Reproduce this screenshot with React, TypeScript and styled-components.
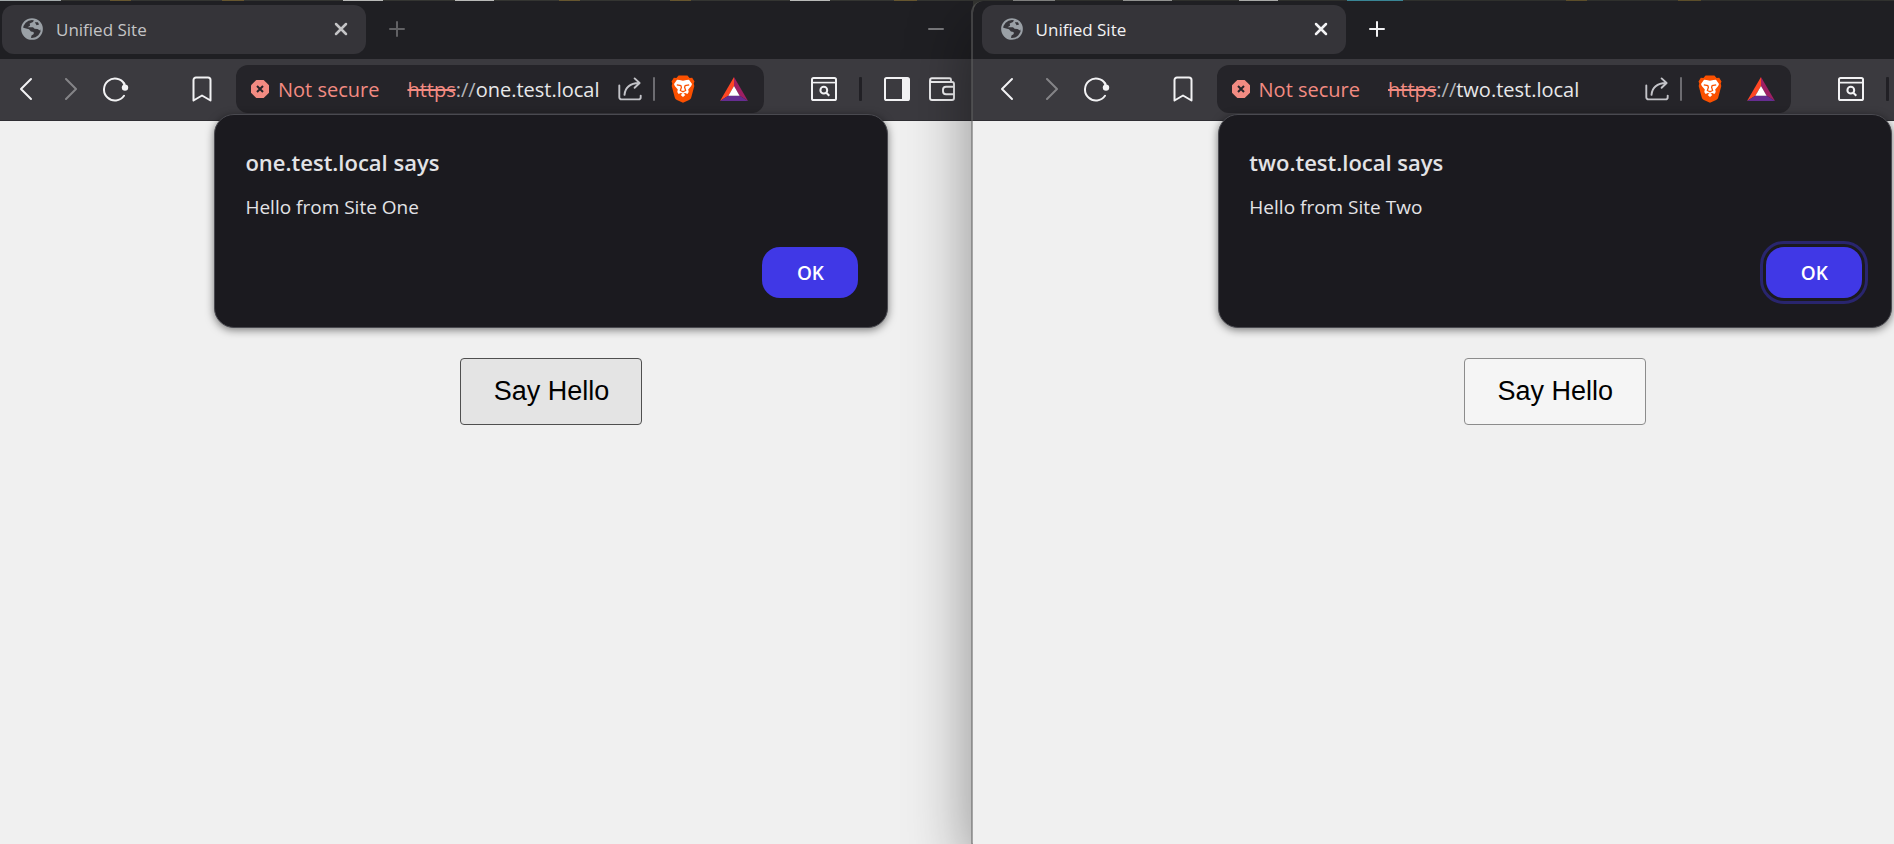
import React from "react";
import styled, { createGlobalStyle } from "styled-components";

const Global = createGlobalStyle`
  * { box-sizing: border-box; }
  html, body, #root { height: 100%; }
  body { margin: 0; overflow: hidden; background: #222; font-family: "Open Sans", "Noto Sans", sans-serif; }
  button, input { font: inherit; margin: 0; }
`;

/* Slivers of the windows behind, visible along the top edge of the screen. */
const slivers: [number, number, string][] = [
  [0, 3.2, "#a3aaab"],
  [5.8, 6.9, "#66562f"],
  [11.7, 12.9, "#66562f"],
  [18.1, 20.2, "#b9bab8"],
  [24, 26.1, "#b9bab8"],
  [29.5, 30.6, "#66562f"],
  [35.4, 36.5, "#66562f"],
  [41.7, 43.8, "#b9bab8"],
  [47.2, 48.4, "#66562f"],
  [53.5, 55.7, "#8b8c8a"],
  [59.3, 61.9, "#a0a19f"],
  [65.4, 67.5, "#b9bab8"],
  [71.1, 74.1, "#3f93a4"],
  [82.7, 83.8, "#66562f"],
  [88.6, 89.8, "#66562f"],
];

const sliverGradient = slivers
  .map(([from, to, c]) => `#343532 ${from}%, ${c} ${from}%, ${c} ${to}%, #343532 ${to}%`)
  .join(", ");

const Desktop = styled.main`
  display: flex;
  min-height: 100vh;
  padding-top: 1px;
  overflow: hidden;
  background: #343532 linear-gradient(90deg, ${sliverGradient}) top / 100% 1px no-repeat;
`;

const Pane = styled.section<{ $front?: boolean }>`
  position: relative;
  z-index: ${(p) => (p.$front ? 1 : 0)};
  flex: ${(p) => (p.$front ? "1 1 0" : "0 0 51.35%")};
  min-width: 0;
  display: flex;
  flex-direction: column;
  margin-left: ${(p) => (p.$front ? -2 : 0)}px;
  background: #1f1f23;
  background-clip: padding-box;
  border-left: ${(p) => (p.$front ? "2px solid rgba(98, 98, 98, 0.53)" : "0")};
  border-top-left-radius: ${(p) => (p.$front ? "12px" : "0")};
  box-shadow: ${(p) => (p.$front ? "0 24px 64px rgba(0, 0, 0, 0.42)" : "none")};
`;

const Clip = styled.div<{ $front?: boolean }>`
  flex: 1;
  display: flex;
  overflow: hidden;
  border-top-left-radius: ${(p) => (p.$front ? "10px" : "0")};
`;

const Frame = styled.div<{ $width: string }>`
  position: relative;
  flex: 0 0 ${(p) => p.$width};
  display: flex;
  flex-direction: column;
`;

const TabStrip = styled.header<{ $front?: boolean }>`
  display: flex;
  align-items: center;
  height: 58px;
  padding-left: ${(p) => (p.$front ? 9 : 2)}px;
  padding-bottom: 2px;
  color: ${(p) => (p.$front ? "#f2f2f4" : "#c4c4c6")};
`;

const Tab = styled.div`
  display: flex;
  align-items: center;
  width: 364px;
  height: 49px;
  padding: 0 14px 0 19px;
  border-radius: 12px;
  background: #353439;
  font-size: 17px;
`;

const TabTitle = styled.span`
  flex: 1;
  padding-left: 13px;
`;

const IconButton = styled.button<{ $w?: number; $gap?: number; $dim?: boolean }>`
  flex: none;
  display: grid;
  place-items: center;
  width: ${(p) => p.$w ?? 28}px;
  height: 28px;
  margin-left: ${(p) => p.$gap ?? 0}px;
  padding: 0;
  border: 0;
  background: none;
  color: inherit;
  opacity: ${(p) => (p.$dim ? 0.4 : 1)};
`;

const Minimize = styled(IconButton)`
  margin-left: 511px;
  opacity: 0.55;
`;

const Toolbar = styled.nav<{ $front?: boolean }>`
  display: flex;
  align-items: center;
  height: 62px;
  padding: 0 0 1px ${(p) => (p.$front ? 20 : 12)}px;
  background: #3b3a3f;
  border-bottom: 1px solid #2f2e33;
  color: #f2f2f4;
`;

const AddressBar = styled.div`
  flex: 1;
  min-width: 0;
  display: flex;
  align-items: center;
  height: 48px;
  margin-left: 20px;
  padding: 0 16px 0 15px;
  border-radius: 12px;
  background: #252429;
  font-size: 20px;
  white-space: nowrap;
`;

const NotSecure = styled.span`
  display: flex;
  align-items: center;
  gap: 9px;
  color: #f28b82;
`;

const Url = styled.span`
  flex: 1;
  padding-left: 28px;
  color: #e8e8ea;
  s { color: #f28b82; }
  i { font-style: normal; color: #b4b4b8; }
`;

const Divider = styled.span<{ $dark?: boolean }>`
  flex: none;
  width: ${(p) => (p.$dark ? 3 : 2)}px;
  height: 24px;
  margin-left: ${(p) => (p.$dark ? 21 : 11)}px;
  border-radius: 1px;
  background: ${(p) => (p.$dark ? "#212025" : "#6d6c71")};
`;

const Trailing = styled.div<{ $front?: boolean }>`
  flex: 0 0 ${(p) => (p.$front ? 347 : 339)}px;
  display: flex;
  align-items: center;
  padding-left: 46px;
`;

const Page = styled.article`
  flex: 1;
  display: flex;
  flex-direction: column;
  align-items: center;
  padding-top: 237px;
  background: #f0f0f0;
`;

const HelloButton = styled.button<{ $pressed?: boolean }>`
  min-width: 182px;
  height: 67px;
  padding: 0 32px;
  border: 1px solid ${(p) => (p.$pressed ? "#4f4f4f" : "#8c8c8c")};
  border-radius: 4px;
  background: ${(p) => (p.$pressed ? "#e4e4e4" : "#f5f5f5")};
  color: #000;
  font-family: "Liberation Sans", Arial, sans-serif;
  font-size: 27px;
`;

const Dialog = styled.div`
  position: absolute;
  top: 113px;
  left: 50%;
  width: 674px;
  transform: translateX(-50%);
  display: flex;
  flex-direction: column;
  padding: 29px 29px 29px 30px;
  border: 1px solid #4a4a50;
  border-radius: 20px;
  background: #1b1a1f;
  color: #e3e3e6;
  box-shadow: 0 2px 8px rgba(0, 0, 0, 0.5);
`;

const DialogTitle = styled.h1`
  margin: 0;
  font-size: 22px;
  line-height: 36px;
  font-weight: 600;
`;

const DialogText = styled.p`
  margin: 13px 0 0;
  font-size: 19px;
  line-height: 28px;
`;

const OkButton = styled.button<{ $focused?: boolean }>`
  align-self: flex-end;
  width: 96px;
  height: 51px;
  margin-top: 26px;
  padding: 0;
  border: 0;
  border-radius: 18px;
  background: #4038e6;
  color: #fff;
  font-size: 19px;
  font-weight: 600;
  outline: ${(p) => (p.$focused ? "3px solid #29256e" : "none")};
  outline-offset: 3px;
`;

const Globe = () => (
  <svg width="22" height="22" viewBox="0 0 22 22" fill="none">
    <circle cx="11" cy="11" r="9.9" stroke="#9aa0a6" strokeWidth="1.9" />
    <path fill="#9aa0a6" d="M13.4 1.2 12 4.1 8.7 5.4 9 7.8 6.6 9.2H12l1.6 1.5 2.9.3 3 1.8.9-3.4C20 5 17 2 13.4 1.2ZM1.2 9.6 8 11.2l1.9 2.2 2.7.6.2 2-2.3 1.5-.7 3.1C4.6 20 1 16 1.2 9.6Z" />
    <path fill="#353439" d="M13.8 4.2h3.1l1.2 2.2-2.5.8Z" />
  </svg>
);

const Stroke = ({ w, h, d, sw = 2 }: { w: number; h: number; d: string; sw?: number }) => (
  <svg width={w} height={h} viewBox={`0 0 ${w} ${h}`} fill="none" stroke="currentColor" strokeWidth={sw} strokeLinecap="round" strokeLinejoin="round">
    <path d={d} />
  </svg>
);

const Reload = () => (
  <svg width="26" height="25" viewBox="0 0 26 25" fill="none">
    <path d="M21.4 6.8A11 11 0 1 0 21 18.8" stroke="currentColor" strokeWidth="2" strokeLinecap="round" />
    <circle cx="22" cy="10.6" r="3.2" fill="currentColor" />
    <path d="M20.4 5.6 22 9" stroke="currentColor" strokeWidth="2" />
  </svg>
);

const Warning = () => (
  <svg width="18" height="18" viewBox="0 0 18 18">
    <path fill="#f28b82" d="M5.3 0h7.4L18 5.3v7.4L12.7 18H5.3L0 12.7V5.3Z" />
    <path d="m6 6 6 6m0-6-6 6" stroke="#252429" strokeWidth="2" />
  </svg>
);

const Share = () => (
  <svg width="24" height="24" viewBox="0 0 24 24" fill="none" stroke="#c3c3c8" strokeWidth="1.9" strokeLinecap="round" strokeLinejoin="round">
    <path d="M1.3 8.5v11.7a2.2 2.2 0 0 0 2.2 2.2h17a2.2 2.2 0 0 0 2.2-2.2v-1.6" />
    <path d="M6.5 17.8C7.2 10.5 12 6.3 21 6M16.6 1.4 21.6 6l-5 4.8" />
  </svg>
);

const BraveLion = () => (
  <svg width="24" height="28" viewBox="0 0 24 28">
    <path fill="#fb5000" d="M7.6.6h8.8l2.2 2.5 2.6-.4 2.3 3.7-.8 2.2.6 2.3-3 11.3c-.4 1.5-1.2 2-2.2 2.8L12 27.7 5.9 25c-1-.8-1.8-1.3-2.2-2.8L.7 10.9l.6-2.3-.8-2.2 2.3-3.7 2.6.4Z" />
    <path fill="#fff" d="m8.6 5 3.4.7 3.4-.7 2.6-.3 3 4.3-.8 2-3 3.6.5 2.4-1.3 1.9-2.2-1-1.7.6 1.8 1.5L12 22l-2.3-2 1.8-1.5-1.7-.6-2.2 1-1.3-1.9.5-2.4-3-3.6L3 9l3-4.3Z" />
    <path fill="none" stroke="#fb5000" strokeWidth="1.3" d="m5.800 9.800 4 .8.6 1.600-1 3.200 2.600 1.400 2.600-1.400-1-3.200.6-1.600 4-.8" />
  </svg>
);

const Triangle = () => (
  <svg width="28" height="24" viewBox="0 0 28 24">
    <path fill="#ff4724" d="M14 0v9L8.6 18.6 0 24Z" />
    <path fill="#9e1f63" d="M14 0v9l5.4 9.6L28 24Z" />
    <path fill="#662d91" d="m0 24 8.6-5.4h10.8L28 24Z" />
    <path fill="#fff" d="m14 9 5.6 9.8H8.4Z" />
  </svg>
);

const SearchPanel = () => (
  <svg width="26" height="24" viewBox="0 0 26 24" fill="none" stroke="currentColor" strokeWidth="2">
    <rect x="1" y="1" width="24" height="22" rx="1.6" />
    <path d="M1 5.6h24" strokeWidth="1.6" />
    <circle cx="12.8" cy="13.2" r="3.4" />
    <path d="m15.3 15.7 3 3" />
  </svg>
);

const SidePanel = () => (
  <svg width="26" height="24" viewBox="0 0 26 24">
    <rect x="1" y="1" width="24" height="22" rx="1.6" fill="none" stroke="currentColor" strokeWidth="2" />
    <path d="M18 1h7v22h-7Z" fill="currentColor" />
  </svg>
);

const Wallet = () => (
  <svg width="26" height="24" viewBox="0 0 26 24" fill="none" stroke="currentColor" strokeWidth="1.9" strokeLinejoin="round">
    <path d="M1 3.3V21a2 2 0 0 0 2 2h20a2 2 0 0 0 2-2V7a2 2 0 0 0-2-2H3A1.9 1.9 0 0 1 3 1.2h17.5A1.5 1.5 0 0 1 22 2.7V5" />
    <path d="M25 9.8h-8a3 3 0 0 0-3 3v1.4a3 3 0 0 0 3 3h8" />
  </svg>
);

type WindowProps = { host: string; greeting: string; width: string; front?: boolean };

const BrowserWindow = ({ host, greeting, width, front }: WindowProps) => (
  <Pane $front={front}>
    <Clip $front={front}>
      <Frame $width={width}>
        <TabStrip $front={front}>
          <Tab>
            <Globe />
            <TabTitle>Unified Site</TabTitle>
            <IconButton $w={22} aria-label="Close tab"><Stroke w={14} h={14} sw={2.5} d="M2 2l10 10M12 2 2 12" /></IconButton>
          </Tab>
          <IconButton $gap={17} $dim={!front} aria-label="New tab"><Stroke w={18} h={18} d="M9 2v14M2 9h14" /></IconButton>
          {!front && <Minimize aria-label="Minimize"><Stroke w={16} h={4} d="M1 2h14" /></Minimize>}
        </TabStrip>
        <Toolbar $front={front}>
          <IconButton aria-label="Back"><Stroke w={14} h={24} d="M12 2 2 12l10 10" /></IconButton>
          <IconButton $gap={17} $dim aria-label="Forward"><Stroke w={14} h={24} d="m2 2 10 10L2 22" /></IconButton>
          <IconButton $gap={17} aria-label="Reload"><Reload /></IconButton>
          <IconButton $gap={58} aria-label="Bookmark"><Stroke w={20} h={26} d="M4 1.5h12A2.5 2.5 0 0 1 18.500 4v20.500L10 19.500l-8.500 5V4A2.500 2.500 0 0 1 4 1.500Z" /></IconButton>
          <AddressBar>
            <NotSecure><Warning />Not secure</NotSecure>
            <Url><s>https</s><i>://</i>{host}</Url>
            <IconButton $w={24} aria-label="Share"><Share /></IconButton>
            <Divider />
            <IconButton $w={24} $gap={16} aria-label="Shields"><BraveLion /></IconButton>
            <IconButton $gap={25} aria-label="Rewards"><Triangle /></IconButton>
          </AddressBar>
          <Trailing $front={front}>
            <IconButton aria-label="Search panel"><SearchPanel /></IconButton>
            <Divider $dark />
            {!front && (
              <>
                <IconButton $gap={21} aria-label="Side panel"><SidePanel /></IconButton>
                <IconButton $gap={17} aria-label="Wallet"><Wallet /></IconButton>
              </>
            )}
          </Trailing>
        </Toolbar>
        <Page>
          <HelloButton $pressed={!front}>Say Hello</HelloButton>
        </Page>
        <Dialog role="alertdialog" aria-label={`${host} says`}>
          <DialogTitle>{host} says</DialogTitle>
          <DialogText>{greeting}</DialogText>
          <OkButton $focused={front}>OK</OkButton>
        </Dialog>
      </Frame>
    </Clip>
  </Pane>
);

export default function App() {
  return (
    <>
      <Global />
      <Desktop>
        <BrowserWindow host="one.test.local" greeting="Hello from Site One" width="113.4%" />
        <BrowserWindow host="two.test.local" greeting="Hello from Site Two" width="126.5%" front />
      </Desktop>
    </>
  );
}
